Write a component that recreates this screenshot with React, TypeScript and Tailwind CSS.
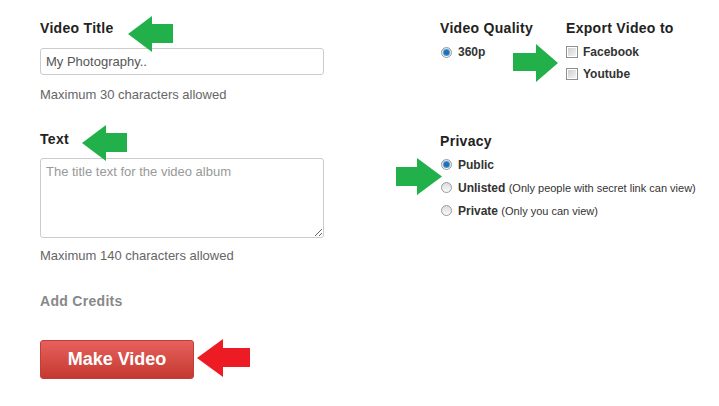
import React from 'react';

type ArrowProps = {
  dir: 'left' | 'right';
  color: string;
  className: string;
  w: number;
  h: number;
  head: number;
  shaft: [number, number];
};

// annotation arrow drawn over the form
function Arrow({ dir, color, className, w, h, head, shaft }: ArrowProps) {
  const [s1, s2] = shaft;
  const pts =
    dir === 'left'
      ? `0,${h / 2} ${head},0 ${head},${s1} ${w},${s1} ${w},${s2} ${head},${s2} ${head},${h}`
      : `${w},${h / 2} ${w - head},0 ${w - head},${s1} 0,${s1} 0,${s2} ${w - head},${s2} ${w - head},${h}`;
  return (
    <svg className={`absolute ${className}`} width={w} height={h} viewBox={`0 0 ${w} ${h}`}>
      <polygon points={pts} fill={color} />
    </svg>
  );
}

function Radio({ checked = false }: { checked?: boolean }) {
  return (
    <span className="flex h-[11px] w-[11px] shrink-0 items-center justify-center rounded-full border border-[#9a9a9a] bg-gradient-to-b from-[#dcdcdc] to-[#fafafa]">
      {checked && (
        <span className="h-[5px] w-[5px] rounded-full bg-[#1d6fb8] shadow-[0_0_0_1px_#4a9ad8]" />
      )}
    </span>
  );
}

function Checkbox() {
  return (
    <span className="flex h-[12px] w-[12px] shrink-0 items-center justify-center border border-[#8e8f8f] bg-white">
      <span className="h-[8px] w-[8px] bg-gradient-to-br from-[#cfcfcf] to-[#f4f4f4]" />
    </span>
  );
}

export default function App() {
  return (
    <div className="relative flex h-[406px] w-[719px] overflow-hidden bg-white font-['Liberation_Sans',Arial,sans-serif]">
      {/* left column */}
      <div className="ml-[40px] flex w-[284px] flex-col pt-[20px]">
        <label className="text-[14px] font-bold leading-[16px] tracking-[0.3px] text-[#222]">Video Title</label>
        <input
          readOnly
          value="My Photography.."
          className="mt-[12px] h-[27px] w-[284px] rounded-[3px] border border-[#ccc] px-[5px] text-[13px] text-[#555] outline-none"
        />
        <p className="mt-[12px] text-[13px] leading-[15px] text-[#666]">Maximum 30 characters allowed</p>

        <label className="mt-[29px] text-[14px] font-bold leading-[16px] tracking-[0.3px] text-[#222]">Text</label>
        <textarea
          placeholder="The title text for the video album"
          className="mt-[11px] h-[80px] w-[284px] rounded-[3px] border border-[#ccc] px-[5px] py-[5px] text-[13px] leading-[16px] text-[#555] outline-none placeholder:text-[#999]"
        />
        <p className="mt-[10px] text-[13px] leading-[15px] text-[#666]">Maximum 140 characters allowed</p>

        <p className="mt-[30px] text-[14px] font-bold leading-[16px] tracking-[0.3px] text-[#888]">Add Credits</p>

        <button className="mt-[31px] h-[39px] w-[154px] rounded-[3px] border border-[#c23d38] bg-gradient-to-b from-[#e8605d] to-[#c4392f] text-[18px] font-bold text-white">
          Make Video
        </button>
      </div>

      {/* right column */}
      <div className="ml-[116px] flex flex-col pt-[20px]">
        <div className="flex">
          <div className="w-[126px]">
            <h3 className="text-[14px] font-bold leading-[16px] tracking-[0.3px] text-[#222]">Video Quality</h3>
            <div className="mt-[5px] flex h-[22px] items-center gap-[6px] pl-[1px]">
              <Radio checked />
              <span className="text-[12px] font-bold text-[#333]">360p</span>
            </div>
          </div>
          <div>
            <h3 className="text-[14px] font-bold leading-[16px] tracking-[0.3px] text-[#222]">Export Video to</h3>
            <div className="mt-[5px] flex h-[22px] items-center gap-[5px]">
              <Checkbox />
              <span className="text-[12px] font-bold text-[#333]">Facebook</span>
            </div>
            <div className="flex h-[22px] items-center gap-[5px]">
              <Checkbox />
              <span className="text-[12px] font-bold text-[#333]">Youtube</span>
            </div>
          </div>
        </div>

        <h3 className="mt-[48px] text-[14px] font-bold leading-[16px] tracking-[0.3px] text-[#222]">Privacy</h3>
        <div className="mt-[4px] flex flex-col pl-[1px]">
          <div className="flex h-[23px] items-center gap-[6px]">
            <Radio checked />
            <span className="text-[12px] font-bold text-[#333]">Public</span>
          </div>
          <div className="flex h-[23px] items-center gap-[6px]">
            <Radio />
            <span className="text-[12px] font-bold text-[#333]">
              Unlisted <span className="text-[11px] font-normal">(Only people with secret link can view)</span>
            </span>
          </div>
          <div className="flex h-[23px] items-center gap-[6px]">
            <Radio />
            <span className="text-[12px] font-bold text-[#333]">
              Private <span className="text-[11px] font-normal">(Only you can view)</span>
            </span>
          </div>
        </div>
      </div>

      {/* annotation arrows */}
      <Arrow dir="left" color="#22b04b" className="left-[128px] top-[16px]" w={45} h={36} head={24} shaft={[8, 27]} />
      <Arrow dir="left" color="#22b04b" className="left-[82px] top-[125px]" w={45} h={36} head={24} shaft={[8, 27]} />
      <Arrow dir="right" color="#22b04b" className="left-[513px] top-[44px]" w={45} h={38} head={22} shaft={[9, 27]} />
      <Arrow dir="right" color="#22b04b" className="left-[396px] top-[158px]" w={46} h={37} head={25} shaft={[9, 28]} />
      <Arrow dir="left" color="#ed1c24" className="left-[197px] top-[339px]" w={53} h={38} head={26} shaft={[9, 28]} />
    </div>
  );
}
